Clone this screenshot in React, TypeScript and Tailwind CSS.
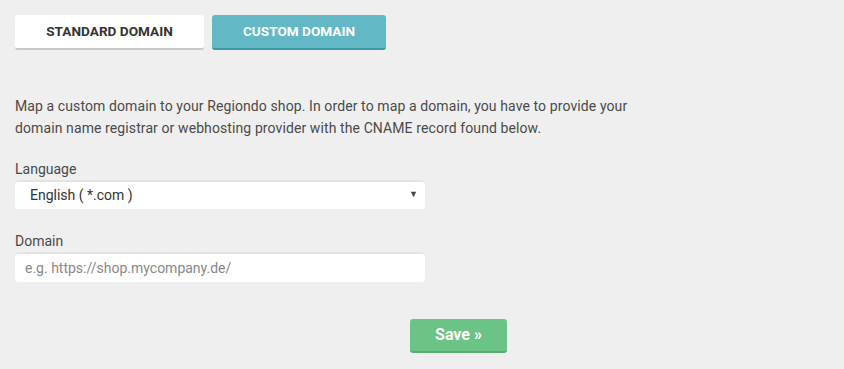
export default function App() {
  return (
    <div className="min-h-[369px] w-full bg-[#efefef] px-[15px] pt-[15px] font-['Roboto','Liberation_Sans',sans-serif] text-[#444]">
      {/* Tabs */}
      <div className="flex gap-2">
        <button className="h-[35px] w-[189px] rounded-[3px] border-b-2 border-[#c9c9c9] bg-white text-[13.6px] font-bold uppercase text-[#333]">
          Standard Domain
        </button>
        <button className="h-[35px] w-[174px] rounded-[3px] border-b-2 border-[#3c9aa6] bg-[#62b9c5] text-[13.6px] font-bold uppercase text-white">
          Custom Domain
        </button>
      </div>

      <p className="mt-[45px] w-[640px] text-[14px] leading-[22px] tracking-[0.1px] text-[#4a4a4a]">
        Map a custom domain to your Regiondo shop. In order to map a domain, you have to provide your domain name registrar or webhosting provider with the CNAME record found below.
      </p>

      <div className="w-[410px]">
        <label className="mt-[20px] block text-[14px] leading-[20px] text-[#4a4a4a]">Language</label>
        <div className="relative mt-[1px] flex h-[29px] items-center rounded-[4px] border-t-2 border-[#e3e3e3] bg-white pl-[15px] text-[14px] text-[#333]">
          English ( *.com )
          <span className="absolute right-[7px] top-[6px] text-[9px] text-[#444]">▼</span>
        </div>

        <label className="mt-[22px] block text-[14px] leading-[20px] text-[#4a4a4a]">Domain</label>
        <div className="mt-[1px] flex h-[30px] items-center rounded-[4px] border-t-2 border-[#e3e3e3] bg-white pl-[10px] text-[14px] text-[#888]">
          e.g. https://shop.mycompany.de/
        </div>
      </div>

      <div className="mt-[37px] flex pl-[395px]">
        <button className="h-[34px] w-[97px] rounded-[3px] border-b-2 border-[#5aad74] bg-[#6cc386] text-[16px] font-bold text-white">
          Save »
        </button>
      </div>
    </div>
  );
}
